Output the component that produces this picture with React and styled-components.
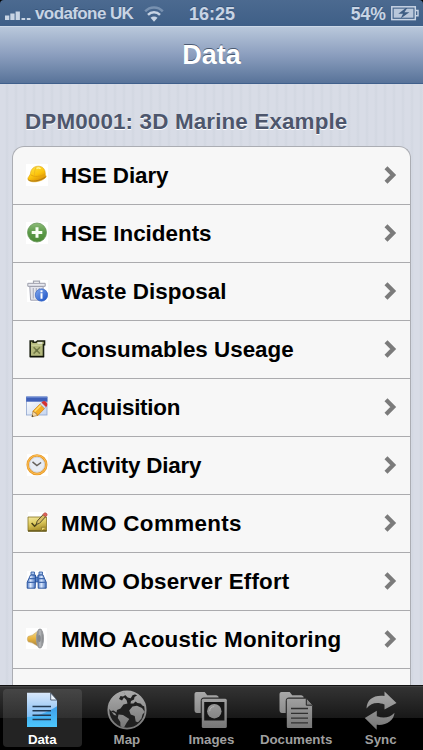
import React from 'react';
import styled, { createGlobalStyle } from 'styled-components';

const GlobalStyle = createGlobalStyle`
  * {
    box-sizing: border-box;
  }

  body {
    margin: 0;
    background: #000;
    font-family: 'Liberation Sans', Arial, Helvetica, sans-serif;
    font-weight: bold;
  }
`;

const HelmetIcon = () => (
  <svg viewBox="0 0 22 22">
    <defs>
      <linearGradient id="helmet" x1="0" y1="0" x2="0.6" y2="1">
        <stop offset="0" stopColor="#ffe94a" />
        <stop offset="0.6" stopColor="#fcc40c" />
        <stop offset="1" stopColor="#d98e05" />
      </linearGradient>
    </defs>
    <rect width="22" height="22" fill="#fff" />
    <path d="M1.800 15.100C2.600 17.500 6 18.100 10 17.700c4.600-.5 8-2.300 10.200-4.700-.2-1.200-.7-1.800-.9-2.600C19.500 5.500 17 2.300 12.500 2.200 8 2.100 5 5 4.500 9.300 4.300 11.500 1.700 13.200 1.800 15.100z" fill="url(#helmet)" stroke="#dda411" strokeWidth="0.6" />
    <path d="M4.800 10.800c3 2.400 10 2.200 14.300-.8" fill="none" stroke="#e3a10c" strokeWidth="0.900" />
    <path d="M10.500 2.800c-1.600 2-2.300 5.500-1.900 9.200" fill="none" stroke="#edb51c" strokeWidth="0.800" />
    <path d="M2.300 15.800c3 2.300 11 1.600 17.200-2.800" fill="none" stroke="#a9771b" strokeWidth="0.9" />
    <path d="M10.500 4.300c1.500-.6 3-.4 4 .6" fill="none" stroke="#fff7a0" strokeWidth="1.300" />
  </svg>
);

const PlusIcon = () => (
  <svg viewBox="0 0 22 22">
    <defs>
      <linearGradient id="plus" x1="0" y1="0" x2="0" y2="1">
        <stop offset="0" stopColor="#8dbb78" />
        <stop offset="0.5" stopColor="#5b9a48" />
        <stop offset="1" stopColor="#4c8b35" />
      </linearGradient>
    </defs>
    <rect width="22" height="22" fill="#fff" />
    <circle cx="11" cy="10.500" r="9.500" fill="url(#plus)" stroke="#68985a" strokeWidth="0.8" />
    <path d="M11 5.200v10.600M5.700 10.500h10.600" stroke="#f8fff4" strokeWidth="3" />
  </svg>
);

const TrashIcon = () => (
  <svg viewBox="0 0 22 22">
    <defs>
      <linearGradient id="info" x1="0" y1="0" x2="1" y2="1">
        <stop offset="0" stopColor="#84a9ef" />
        <stop offset="1" stopColor="#174fc4" />
      </linearGradient>
    </defs>
    <rect x="1" width="21" height="22" fill="#fff" />
    <path d="M3.800 6.500h13.400l-.8 13.700H4.600z" fill="#e4e5ed" stroke="#a1a3b1" />
    <path d="M7.300 8v10.500M10.300 8v10.500M13.300 8v10.500" stroke="#b0b2c0" strokeWidth="1.200" />
    <path d="M1.800 3.300h17.400v3H1.800z" fill="#e9eaf0" stroke="#9b9daa" />
    <path d="M7.500 3.200V1.200h6v2" fill="none" stroke="#a3a5b0" strokeWidth="1.200" />
    <circle cx="15.500" cy="15" r="6.200" fill="url(#info)" stroke="#2d5ec1" strokeWidth="0.6" />
    <path d="M15.500 13.300v5.400M15.500 10.300v1.900" fill="none" stroke="#fff" strokeWidth="2" />
  </svg>
);

const CanIcon = () => (
  <svg viewBox="0 0 22 22">
    <path d="M4.200 5.300V3h3v1.300H10L11.500 3h7v3.700h-1V18.500H4.200z" fill="#b3b87c" stroke="#1c2111" strokeWidth="1.600" />
    <path d="M11.500 5h4.700" stroke="#f7f7f7" strokeWidth="1.300" />
    <path d="M5.400 7.200h10.500" stroke="#cdd39b" strokeWidth="1.200" />
    <path d="M7.600 9.300l6.300 6.300M13.900 9.300l-6.300 6.300" stroke="#757c48" strokeWidth="1.500" />
    <rect x="9.600" y="11.300" width="2.300" height="2.300" fill="#687040" />
    <path d="M4 18.700h14" stroke="#0d1007" strokeWidth="1.300" />
  </svg>
);

const EditWindowIcon = () => (
  <svg viewBox="0 0 22 22">
    <defs>
      <linearGradient id="pane" x1="0" y1="0" x2="1" y2="1">
        <stop offset="0" stopColor="#fff" />
        <stop offset="1" stopColor="#c5d5ef" />
      </linearGradient>
    </defs>
    <rect x="0.500" y="1" width="20.500" height="18" fill="url(#pane)" stroke="#8fa5cf" strokeWidth="0.8" />
    <rect x="0.200" y="0.700" width="21.200" height="5" fill="#3e5fb8" />
    <path d="M.4 1.200h20.800" stroke="#7390d5" />
    <path d="M6 20.800l1-5.600 4.800 4.200z" fill="#f5d8a4" stroke="#a57328" strokeWidth="0.6" />
    <path d="M6.800 15.300l7.200-7.200 4.600 4.400-7 7.200c-.2-2-2.400-4-4.800-4.400z" fill="#f5ae23" stroke="#cb7c10" strokeWidth="0.7" />
    <path d="M8.600 15.500l6.600-6.600" stroke="#ffdc69" strokeWidth="1.500" />
    <path d="M14 8.100l1.500-1.500 4.600 4.400-1.500 1.500z" fill="#d9dbe4" stroke="#969aaa" strokeWidth="0.5" />
    <path d="M15.500 6.600c1.500-2 3-2 4.800-.4 1.500 1.600 1.300 3.300-.2 4.800z" fill="#d63232" />
    <path d="M5.700 21l.5-2 1.400 1.300z" fill="#35302b" />
  </svg>
);

const ClockIcon = () => (
  <svg viewBox="0 0 22 22">
    <rect x="1" width="21" height="22" fill="#fff" />
    <circle cx="11" cy="10.700" r="9.200" fill="#e8edf4" stroke="#e99b27" strokeWidth="2.700" />
    <circle cx="11" cy="10.700" r="9.300" fill="none" stroke="#ffc663" strokeWidth="0.8" />
    <circle cx="11" cy="10.700" r="7.500" fill="none" stroke="#c8cedb" strokeWidth="0.8" />
    <path d="M6.500 7.900l4.400 3.600 4.200-3" fill="none" stroke="#65615b" strokeWidth="1.500" />
  </svg>
);

const NoteIcon = () => (
  <svg viewBox="0 0 22 22">
    <defs>
      <linearGradient id="note" x1="0" y1="0" x2="0.3" y2="1">
        <stop offset="0" stopColor="#f3e8a4" />
        <stop offset="0.5" stopColor="#e0cd60" />
        <stop offset="1" stopColor="#ad922b" />
      </linearGradient>
    </defs>
    <rect x="2" width="20" height="21" fill="#fff" />
    <path d="M2 5h18.500v13.800H2z" fill="url(#note)" stroke="#867422" strokeWidth="0.8" />
    <path d="M2 19h18.700" stroke="#665919" strokeWidth="1.500" />
    <path d="M15.500 18.500v-3.200h4.800" fill="#ead675" stroke="#8b7826" strokeWidth="0.8" />
    <path d="M5.600 11l3 3.300 2.400-2.300" fill="none" stroke="#4b4217" strokeWidth="1.500" />
    <path d="M10.200 12.300l1-3.200 6-6.600 2.500 2.100-6.300 6.800z" fill="#d7be64" stroke="#574f2b" strokeWidth="1" />
    <path d="M16.700 2.500l1.600-1.600c1.400-.8 3.500.8 2.800 2.300l-1.600 1.600z" fill="#dd625a" stroke="#a3433d" strokeWidth="0.5" />
  </svg>
);

const BinocularsIcon = () => (
  <svg viewBox="0 0 22 22">
    <defs>
      <linearGradient id="lens" x1="0" y1="0" x2="1" y2="0">
        <stop offset="0" stopColor="#527cc8" />
        <stop offset="0.400" stopColor="#dceaff" />
        <stop offset="1" stopColor="#4370bd" />
      </linearGradient>
    </defs>
    <rect x="1" y="1" width="19" height="17" fill="#fff" />
    <path d="M8.800 7h4v5h-4z" fill="#5b84c8" stroke="#1c4791" strokeWidth="0.7" />
    <path d="M4.500 5h5v4.500l-.3 8.700H1.200v-6z" fill="url(#lens)" stroke="#204c99" strokeWidth="0.9" />
    <path d="M12 5h5l3.200 7.200v6h-8z" fill="url(#lens)" stroke="#204c99" strokeWidth="0.9" />
    <path d="M5 2h3.500v2.700H5zM13 2h3.500v2.700H13z" fill="#a8c3ee" stroke="#2b559d" strokeWidth="0.8" />
    <path d="M3.300 8.700h6M12.300 8.700h6M1.300 12.300h8M12.200 12.300h8" stroke="#4068ad" strokeWidth="1.200" />
  </svg>
);

const SpeakerIcon = () => (
  <svg viewBox="0 0 22 22">
    <defs>
      <linearGradient id="horn" x1="0" y1="0" x2="0" y2="1">
        <stop offset="0" stopColor="#f7e3a1" />
        <stop offset="0.500" stopColor="#e8b440" />
        <stop offset="1" stopColor="#9c7940" />
      </linearGradient>
      <linearGradient id="cone" x1="0" y1="0" x2="1" y2="0">
        <stop offset="0" stopColor="#74777c" />
        <stop offset="0.500" stopColor="#b8babd" />
        <stop offset="1" stopColor="#777a7d" />
      </linearGradient>
    </defs>
    <rect width="21" height="21" fill="#fff" />
    <path d="M2 8.500c1.500-.8 3-.7 4.500-1.500L14 1.400v18.200L6 14.800c-2 0-3-.4-4-1.200-.9-1.700-.9-3.300 0-5.100z" fill="url(#horn)" stroke="#bea36a" strokeWidth="0.5" />
    <ellipse cx="14" cy="10.500" rx="3.400" ry="9.400" fill="url(#cone)" stroke="#999b9e" strokeWidth="1.200" />
    <ellipse cx="13.300" cy="10.500" rx="1.500" ry="3.500" fill="#85888c" />
  </svg>
);

const Chevron = () => (
  <ChevronSvg viewBox="0 0 13 18">
    <path d="M2 1.800l7.200 7.200L2 16.200" fill="none" stroke="#7b7b7b" strokeWidth="4.200" />
  </ChevronSvg>
);

const SignalIcon = () => (
  <svg className="signal" width="27" height="10" viewBox="0 0 27 10" fill="#c8d4e4">
    <rect y="5.500" width="4.300" height="4.500" />
    <rect x="5.300" y="3.500" width="4.300" height="6.500" />
    <rect x="10.600" y="1.500" width="4.300" height="8.500" />
    <rect x="16.500" y="8" width="3.700" height="2" />
    <rect x="21.800" y="8" width="3.700" height="2" />
  </svg>
);

const WifiIcon = () => (
  <svg width="20" height="16" viewBox="0 0 20 16" fill="none" strokeWidth="2.500">
    <path d="M1.200 5.300C6 .1 14 .1 18.800 5.300" stroke="#7891b0" />
    <path d="M4 8.800c3.300-3.400 8.700-3.400 12 0" stroke="#c8d4e4" />
    <path d="M10 15.700l-3.500-3.900c2-1.800 5-1.800 7 0z" fill="#c8d4e4" />
  </svg>
);

const BatteryIcon = () => (
  <svg width="28" height="15" viewBox="0 0 28 15">
    <rect x="0.800" y="0.800" width="23.500" height="12.800" fill="none" stroke="#c8d4e4" strokeWidth="1.500" />
    <rect x="2.700" y="2.700" width="19.700" height="9" fill="#b9c7da" />
    <path d="M24.500 4.500h2.500v5.200h-2.500" fill="none" stroke="#c8d4e4" strokeWidth="1.400" />
    <path d="M14.800 2l-7.500 5.700h4.700L9.700 12.500l8.700-6.200h-5L16.300 2z" fill="#3e5d83" />
  </svg>
);

const DataIcon = () => (
  <svg width="32" height="36" viewBox="0 0 32 36">
    <defs>
      <linearGradient id="sheet" x1="0" y1="0" x2="0" y2="1">
        <stop offset="0" stopColor="#d8e7fa" />
        <stop offset="0.600" stopColor="#8ec3f5" />
        <stop offset="1" stopColor="#67c5fa" />
      </linearGradient>
      <linearGradient id="sheetLow" x1="0" y1="0" x2="0" y2="1">
        <stop offset="0" stopColor="#3f9fea" />
        <stop offset="1" stopColor="#4cc6fc" />
      </linearGradient>
    </defs>
    <path d="M1 .8h23.500L31 8v27H1z" fill="url(#sheet)" />
    <path d="M1 25c10-.4 20-4.500 30-10.800V35H1z" fill="url(#sheetLow)" />
    <path d="M24.700 1v7H31z" fill="#eef6ff" stroke="#37465b" strokeWidth="0.8" />
    <path d="M6.500 14.500H25M6.500 18.700H25M6.500 23.200H25M6.500 27.500H25" stroke="#223952" strokeWidth="1.500" />
  </svg>
);

const MapIcon = () => (
  <svg width="40" height="40" viewBox="0 0 40 40">
    <circle cx="20" cy="20" r="18.600" fill="#202020" stroke="url(#gray)" strokeWidth="1.900" />
    <path d="M1.500 18C2.500 10 6.500 5.200 12 3l5-1 1.500 3-2.500 1.500-2.500-.5-1.500 3 3 1.500 2-3 2.500 2.500 1 3.500-4 1-3 4-3.500 1.500-.5 2.500-3-2-2.500.5L5 22l3 1 1.500 2.500L7 25z" fill="url(#gray)" />
    <path d="M17 2l7-.3 5 2.300-3.500 1.200-1.800 3-3-.7L18 4.800z" fill="url(#gray)" />
    <path d="M24 11l3-1.500.5-2.500 4-2.500 4 5 3 7-2.500-.5-2.500-2.500-3-.5-2-1.500-2 2h-3z" fill="url(#gray)" />
    <path d="M25.500 16.500l4.500-.7 5 2.200 2.800 4-2.300 2.500-1 4-3.500 3.700-2.300-.7-1-5.500-4-1.500-1.500-4z" fill="url(#gray)" />
    <path d="M11.500 24.500l4.500.5 6.300 4-2.800 4-2.500 4.500-3.500-1-.2-4.500-2.500-4z" fill="url(#gray)" />
  </svg>
);

const FolderShape = () => (
  <path d="M2.500 2h8.200l2.500 3.300H22c1.500 0 2.500 1 2.700 2.200H10C8 7.500 6.700 9 6.700 11v12H3C1.500 23 .5 22 .5 20V4.500C.5 3 1.200 2 2.500 2z" fill="url(#gray)" />
);

const ImagesIcon = () => (
  <svg width="34" height="40" viewBox="0 0 34 40">
    <FolderShape />
    <rect x="7.800" y="8.700" width="25" height="29.300" rx="1.500" fill="url(#gray)" />
    <rect x="10.200" y="12" width="20.200" height="18.500" fill="#151515" />
    <circle cx="20.300" cy="21.200" r="7.200" fill="url(#gray)" />
    <path d="M15.700 21.200c0-2.800 2-4.600 4.500-4.600" fill="none" stroke="#b4b4b4" strokeWidth="1" />
  </svg>
);

const DocumentsIcon = () => (
  <svg width="34" height="40" viewBox="0 0 34 40">
    <FolderShape />
    <path d="M9.300 8.700h18l5.800 6.500V38H9.300c-1 0-1.500-.5-1.500-1.500V10.200c0-1 .5-1.500 1.500-1.500z" fill="url(#gray)" />
    <path d="M27.300 8.700v6.500h6" fill="#858585" stroke="#222" strokeWidth="1" />
    <path d="M12 18.500h17M12 23.300h17M12 28.100h17M12 32.900h17" stroke="#303030" strokeWidth="1.300" />
  </svg>
);

const SyncIcon = () => (
  <svg width="34" height="40" viewBox="0 0 34 40">
    <path d="M2.500 18.500C3 9.500 9.500 4.800 20.500 6V1.500L32.500 13l-12 6.500v-5C13 11.700 7.500 12.700 2.500 18.500z" fill="url(#gray)" />
    <path d="M30.500 22.800C30 30.500 22 35.800 12.700 34.800v4.900L.8 28l12-7.300v5.600c7 2.500 12.700 1.500 17.700-3.500z" fill="url(#gray)" />
  </svg>
);

const rows = [
  { label: 'HSE Diary', icon: HelmetIcon, tracking: -0.1 },
  { label: 'HSE Incidents', icon: PlusIcon },
  { label: 'Waste Disposal', icon: TrashIcon, tracking: 0.06 },
  { label: 'Consumables Useage', icon: CanIcon },
  { label: 'Acquisition', icon: EditWindowIcon, tracking: -0.25 },
  { label: 'Activity Diary', icon: ClockIcon, tracking: -0.2 },
  { label: 'MMO Comments', icon: NoteIcon, tracking: 0.35 },
  { label: 'MMO Observer Effort', icon: BinocularsIcon, tracking: 0.17 },
  { label: 'MMO Acoustic Monitoring', icon: SpeakerIcon, tracking: 0.17 },
];

const tabs = [
  { label: 'Data', icon: DataIcon, active: true },
  { label: 'Map', icon: MapIcon },
  { label: 'Images', icon: ImagesIcon },
  { label: 'Documents', icon: DocumentsIcon },
  { label: 'Sync', icon: SyncIcon },
];

class App extends React.Component {
  render() {
    return (
      <Screen>
        <GlobalStyle />
        <StatusBar>
          <Carrier>
            <SignalIcon />
            <span className="name">vodafone UK</span>
            <WifiIcon />
          </Carrier>
          <span>16:25</span>
          <Power>
            <span>54%</span>
            <BatteryIcon />
          </Power>
        </StatusBar>
        <NavBar>Data</NavBar>
        <Content>
          <SectionTitle>DPM0001: 3D Marine Example</SectionTitle>
          <Card>
            {rows.map(({ label, icon: Icon, tracking }) => (
              <Row key={label}>
                <RowIcon><Icon /></RowIcon>
                <RowLabel $tracking={tracking}>{label}</RowLabel>
                <Chevron />
              </Row>
            ))}
            <Row />
          </Card>
        </Content>
        <TabBar>
          <SharedDefs width="0" height="0">
            <defs>
              <linearGradient id="gray" x1="0" y1="0" x2="0" y2="40" gradientUnits="userSpaceOnUse">
                <stop offset="0" stopColor="#acacac" />
                <stop offset="1" stopColor="#747474" />
              </linearGradient>
            </defs>
          </SharedDefs>
          {tabs.map(({ label, icon: Icon, active }) => (
            <Tab key={label} $active={active}>
              <TabIcon><Icon /></TabIcon>
              <span>{label}</span>
            </Tab>
          ))}
        </TabBar>
      </Screen>
    );
  }
}

const Screen = styled.div`
  display: flex;
  flex-direction: column;
  width: 423px;
  height: 750px;
  overflow: hidden;
  background: #000;
`;

const StatusBar = styled.div`
  display: grid;
  grid-template-columns: 1fr auto 1fr;
  align-items: center;
  flex: none;
  height: 26px;
  padding: 1px 4px 0 5px;
  border-radius: 4px 4px 0 0;
  background: linear-gradient(#4c6a90, #3f5f87);
  color: #c8d4e4;
  font-size: 18px;
  line-height: 24px;
  text-shadow: 0 -1px 0 #38557a;
`;

const Carrier = styled.div`
  display: flex;
  align-items: center;

  svg {
    flex: none;
  }

  .signal {
    margin-top: 2px;
  }

  .name {
    margin: 0 11px 0 3px;
    font-size: 17px;
    letter-spacing: -0.6px;
    white-space: nowrap;
  }
`;

const Power = styled.div`
  display: flex;
  align-items: center;
  justify-content: flex-end;
  gap: 5px;
  font-size: 17.6px;
`;

const NavBar = styled.div`
  display: flex;
  align-items: center;
  justify-content: center;
  flex: none;
  height: 58px;
  padding-top: 1px;
  border-top: 1px solid #ccd8e7;
  border-bottom: 1px solid #40608c;
  background: linear-gradient(#b9c8db, #8b9ebe 50%, #587399);
  color: #fff;
  font-size: 27px;
  text-shadow: 0 -1px 0 #4b5a72;
`;

const Content = styled.div`
  flex: 1;
  min-height: 0;
  padding: 22px 12px 0;
  overflow: hidden;
  background: repeating-linear-gradient(90deg, #d8dce6 0, #d8dce6 5px, #d2d7e1 7px, #d8dce6 9px);
`;

const SectionTitle = styled.div`
  height: 40px;
  padding: 3px 13px 0;
  color: #4d566c;
  font-size: 22.4px;
  letter-spacing: 0.15px;
  line-height: 26px;
  white-space: nowrap;
  text-shadow: 0 1px 0 #fff;
`;

const Card = styled.div`
  overflow: hidden;
  border: 1px solid #abadb3;
  border-bottom: 0;
  border-radius: 12px 12px 0 0;
  background: #f7f7f7;
`;

const Row = styled.div`
  display: flex;
  align-items: center;
  height: 58px;
  padding: 0 13px 1px;
  border-bottom: 1px solid #ababae;
`;

const RowIcon = styled.div`
  width: 22px;
  height: 22px;
  margin-right: 13px;

  svg {
    display: block;
  }
`;

const RowLabel = styled.span`
  flex: 1;
  padding-top: 2px;
  color: #000;
  font-size: 22.4px;
  letter-spacing: ${props => props.$tracking || 0}px;
  white-space: nowrap;
`;

const ChevronSvg = styled.svg`
  width: 13px;
  height: 18px;
`;

const TabBar = styled.div`
  display: flex;
  flex: none;
  height: 65px;
  border-top: 1px solid #111;
  box-shadow: inset 0 1px 0 #444;
  background: linear-gradient(#343434, #181818 50%, #000 50%);
`;

const SharedDefs = styled.svg`
  position: absolute;
`;

const Tab = styled.div`
  display: flex;
  flex: 1 1 0;
  flex-direction: column;
  align-items: center;
  min-width: 0;
  margin: 3px;
  border-radius: 4px;
  background: ${props => (props.$active ? 'linear-gradient(#464646, #303030 50%, #232323 50%)' : 'none')};
  color: ${props => (props.$active ? '#fff' : '#9f9f9f')};
  font-size: 13.3px;
  line-height: 16px;
`;

const TabIcon = styled.div`
  display: flex;
  align-items: center;
  flex: none;
  height: 42px;
  margin-bottom: 1px;
`;

export default App;
